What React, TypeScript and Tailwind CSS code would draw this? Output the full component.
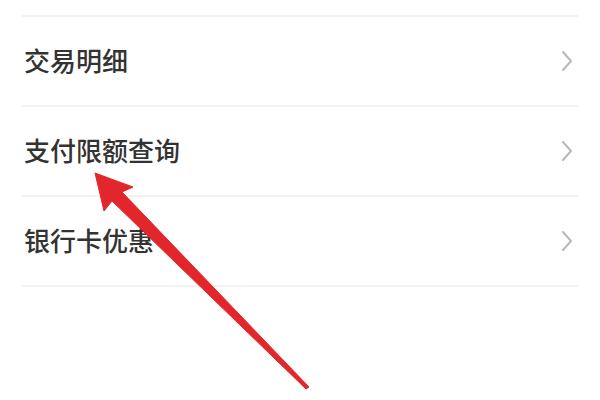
import React from "react";

const items = ["交易明细", "支付限额查询", "银行卡优惠"];

function Chevron() {
  return (
    <svg width="14" height="22" viewBox="0 0 14 22" fill="none">
      <path d="M3 2 L11 11 L3 20" stroke="#b8b8b8" strokeWidth="2" strokeLinecap="round" strokeLinejoin="round" />
    </svg>
  );
}

export default function App() {
  return (
    <div
      className="relative w-[600px] h-[400px] bg-white overflow-hidden"
      style={{ fontFamily: '"Noto Sans CJK SC", "Noto Sans", sans-serif' }}
    >
      <div className="pt-[15px] pl-[22px] pr-[22px]">
        {items.map((t) => (
          <div
            key={t}
            className="h-[90px] border-t-2 border-[#f2f2f2] flex items-center justify-between pl-[2px] pr-[4px]"
          >
            <span className="text-[26px] font-medium text-[#333333] leading-none -mt-[2px]">{t}</span>
            <Chevron />
          </div>
        ))}
        <div className="border-t-2 border-[#f2f2f2]" />
      </div>
      <svg className="absolute inset-0 pointer-events-none" width="600" height="400" viewBox="0 0 600 400">
        <polygon
          points="95,173 133,187 122,192 309,387 306,389 112,201 104,211"
          fill="#e3262b"
          stroke="#e3262b"
          strokeWidth="1"
          strokeLinejoin="round"
        />
      </svg>
    </div>
  );
}
